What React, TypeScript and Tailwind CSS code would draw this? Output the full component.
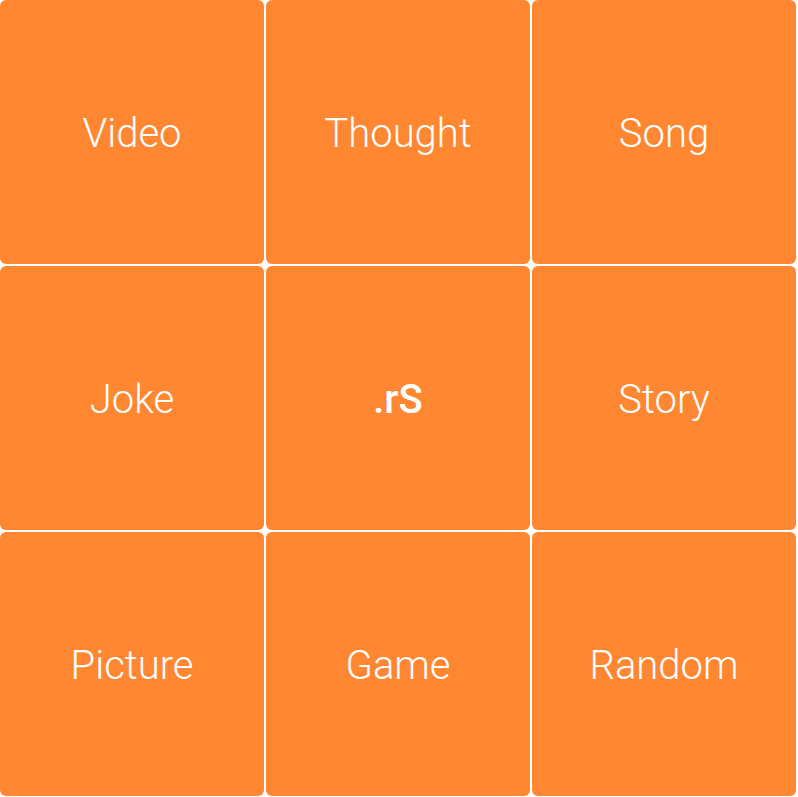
const tiles = ["Video", "Thought", "Song", "Joke", ".rS", "Story", "Picture", "Game", "Random"];

export default function App() {
  return (
    <div className="min-h-screen bg-white" style={{ fontFamily: "Roboto, sans-serif" }}>
      <div className="grid w-[796px] grid-cols-[repeat(3,264px)] grid-rows-[repeat(3,264px)] gap-[2px]">
        {tiles.map((t) => (
          <div
            key={t}
            className={
              t === ".rS"
                ? "flex items-center justify-center rounded-[6px] bg-[#ff8731] pt-1 text-[40px] font-medium text-white"
                : "flex items-center justify-center rounded-[6px] bg-[#ff8731] pt-1 text-[40px] font-light text-white"
            }
          >
            {t}
          </div>
        ))}
      </div>
    </div>
  );
}
